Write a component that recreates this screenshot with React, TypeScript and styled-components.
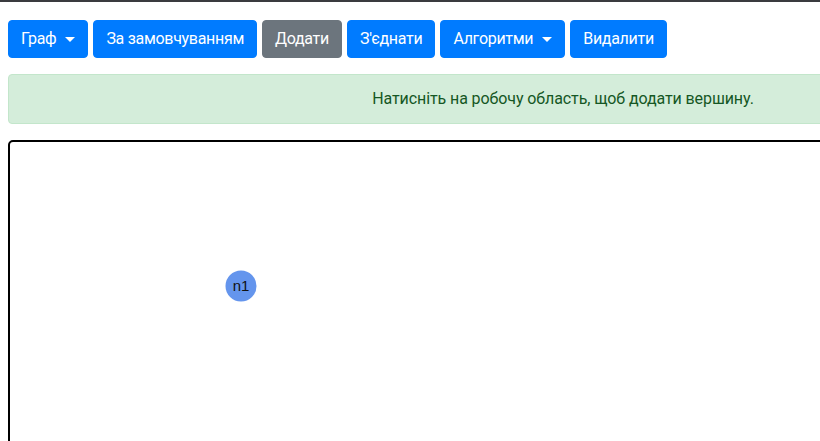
import React from "react";
import styled, { createGlobalStyle } from "styled-components";

const Global = createGlobalStyle`
  html, body {
    margin: 0;
    padding: 0;
    overflow: hidden;
    background: #fff;
  }
  body {
    font-family: Roboto, "Noto Sans", sans-serif;
    font-size: 16px;
    line-height: 1.5;
    color: #212529;
  }
`;

const TopBar = styled.div`
  height: 2px;
  background: #3a3b3f;
`;

const Page = styled.div`
  padding: 18px 8px 0 8px;
  width: 1110px;
`;

const Toolbar = styled.div`
  display: flex;
  gap: 5px;
  align-items: center;
`;

const Button = styled.button<{ $variant?: "primary" | "secondary" }>`
  display: inline-flex;
  align-items: center;
  height: 38px;
  padding: 6px 12px;
  border: 1px solid ${(p) => (p.$variant === "secondary" ? "#6c757d" : "#007bff")};
  background: ${(p) => (p.$variant === "secondary" ? "#6c757d" : "#007bff")};
  color: #fff;
  font-family: inherit;
  font-size: 16px;
  line-height: 1.5;
  letter-spacing: -0.3px;
  border-radius: 4px;
  cursor: pointer;
  box-sizing: border-box;
  white-space: nowrap;
`;

const Caret = styled.span`
  display: inline-block;
  margin-left: 9px;
  margin-top: 1px;
  width: 0;
  height: 0;
  border-top: 5px solid #fff;
  border-left: 5px solid transparent;
  border-right: 5px solid transparent;
`;

const Alert = styled.div`
  margin-top: 16px;
  box-sizing: border-box;
  height: 50px;
  padding: 12px 20px;
  background: #d4edda;
  border: 1px solid #c3e6cb;
  border-radius: 4px;
  color: #155724;
  text-align: center;
  letter-spacing: -0.1px;
`;

const Canvas = styled.div`
  position: relative;
  margin-top: 16px;
  height: 520px;
  border: 2px solid #000;
  border-radius: 5px;
  box-sizing: border-box;
  overflow: hidden;
`;

const GraphSvg = styled.svg`
  display: block;
  width: 100%;
  height: 100%;
`;

const nodes = [{ id: "n1", x: 231, y: 144 }];

export default function App() {
  return (
    <>
      <Global />
      <TopBar />
      <Page>
        <Toolbar>
          <Button>
            Граф
            <Caret />
          </Button>
          <Button>За замовчуванням</Button>
          <Button $variant="secondary">Додати</Button>
          <Button>З'єднати</Button>
          <Button>
            Алгоритми
            <Caret />
          </Button>
          <Button>Видалити</Button>
        </Toolbar>
        <Alert>Натисніть на робочу область, щоб додати вершину.</Alert>
        <Canvas>
          <GraphSvg>
            {nodes.map((n) => (
              <g key={n.id}>
                <circle cx={n.x} cy={n.y} r={15.5} fill="#6495ed" />
                <text
                  x={n.x}
                  y={n.y + 5}
                  textAnchor="middle"
                  fontFamily="'Liberation Sans', Arial, sans-serif"
                  fontSize="15"
                  fill="#111"
                >
                  {n.id}
                </text>
              </g>
            ))}
          </GraphSvg>
        </Canvas>
      </Page>
    </>
  );
}
